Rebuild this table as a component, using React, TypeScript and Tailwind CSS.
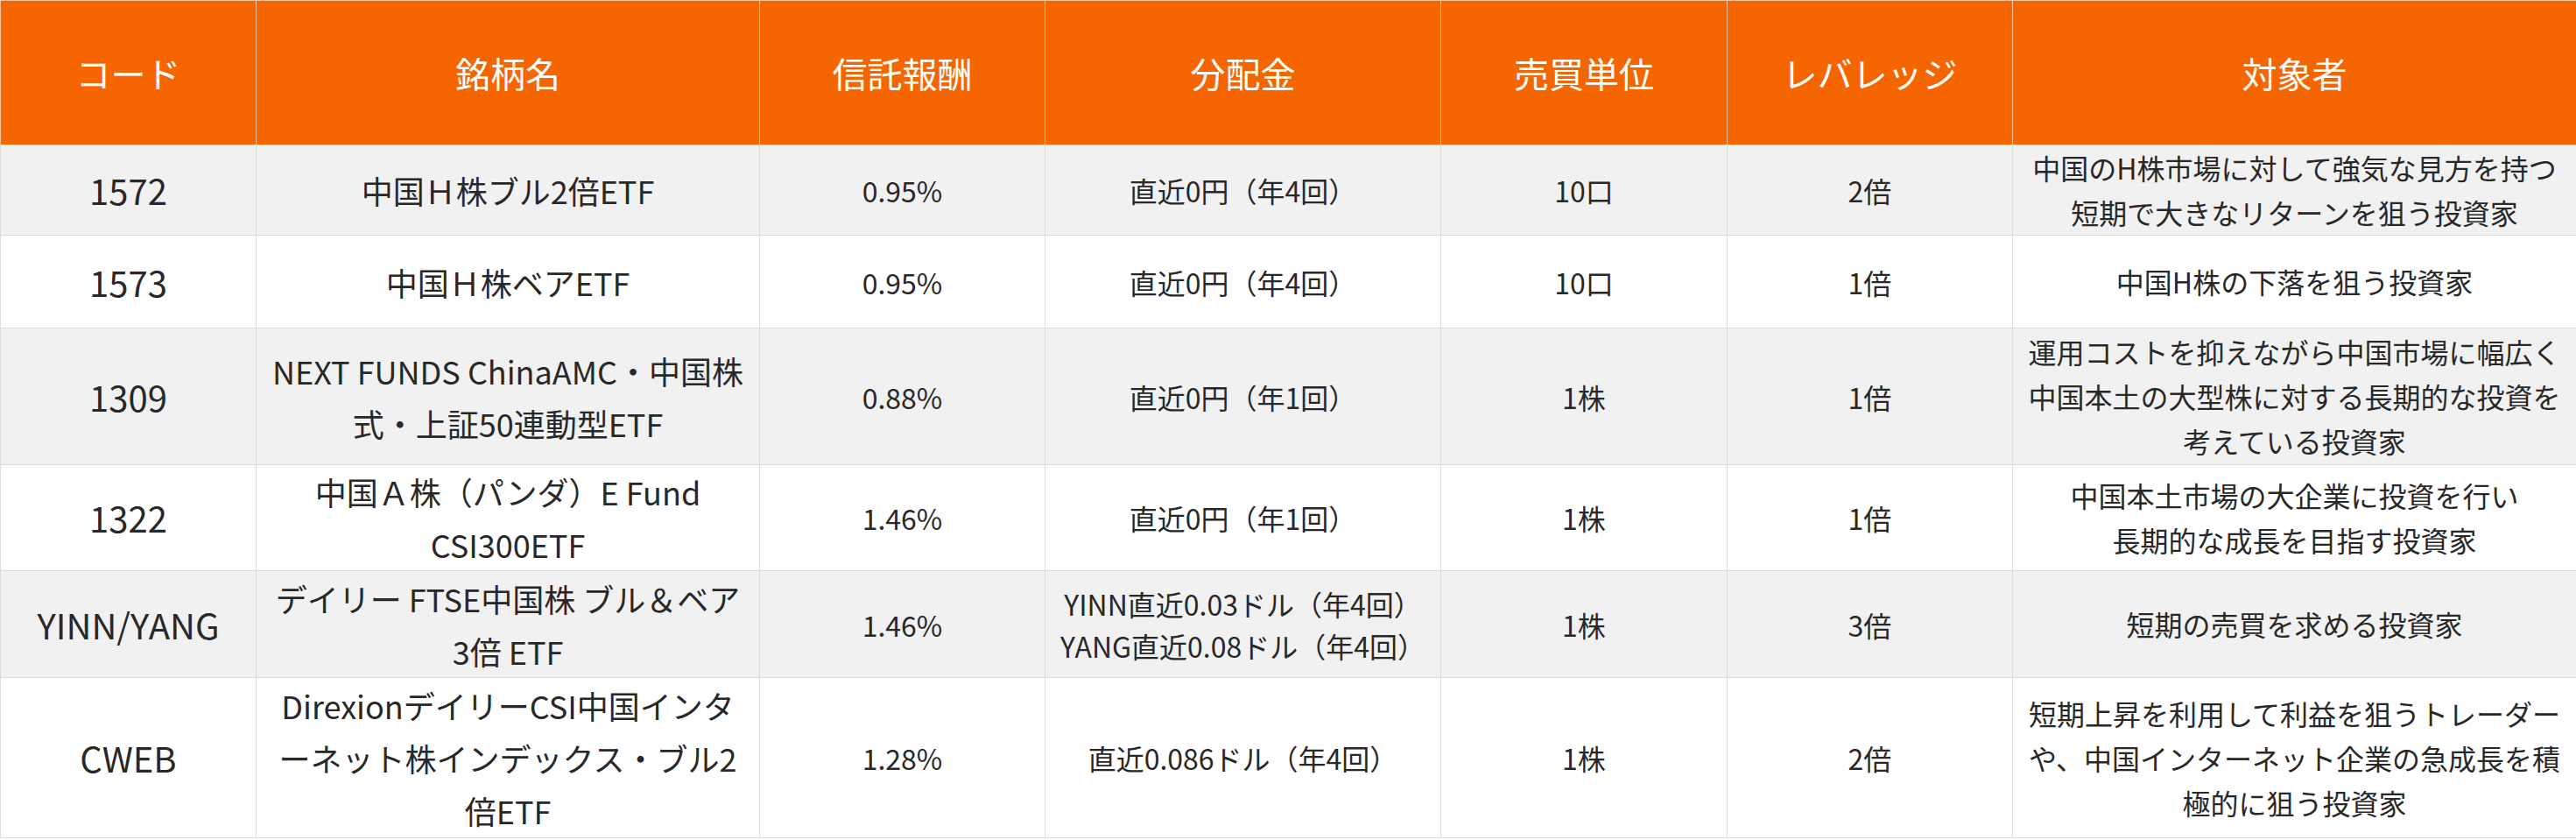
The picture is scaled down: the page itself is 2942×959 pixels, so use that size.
import React from 'react';

type Row = {
  code: string;
  name: string[];
  fee: string;
  dividend: string[];
  unit: string;
  leverage: string;
  target: string[];
  height: string;
  shaded: boolean;
};

const headers = ['コード', '銘柄名', '信託報酬', '分配金', '売買単位', 'レバレッジ', '対象者'];

const rows: Row[] = [
  {
    code: '1572',
    name: ['中国Ｈ株ブル2倍ETF'],
    fee: '0.95%',
    dividend: ['直近0円（年4回）'],
    unit: '10口',
    leverage: '2倍',
    target: ['中国のH株市場に対して強気な見方を持つ', '短期で大きなリターンを狙う投資家'],
    height: 'h-[103px]',
    shaded: true,
  },
  {
    code: '1573',
    name: ['中国Ｈ株ベアETF'],
    fee: '0.95%',
    dividend: ['直近0円（年4回）'],
    unit: '10口',
    leverage: '1倍',
    target: ['中国H株の下落を狙う投資家'],
    height: 'h-[106px]',
    shaded: false,
  },
  {
    code: '1309',
    name: ['NEXT FUNDS ChinaAMC・中国株', '式・上証50連動型ETF'],
    fee: '0.88%',
    dividend: ['直近0円（年1回）'],
    unit: '1株',
    leverage: '1倍',
    target: ['運用コストを抑えながら中国市場に幅広く', '中国本土の大型株に対する長期的な投資を', '考えている投資家'],
    height: 'h-[156px]',
    shaded: true,
  },
  {
    code: '1322',
    name: ['中国Ａ株（パンダ）E Fund', 'CSI300ETF'],
    fee: '1.46%',
    dividend: ['直近0円（年1回）'],
    unit: '1株',
    leverage: '1倍',
    target: ['中国本土市場の大企業に投資を行い', '長期的な成長を目指す投資家'],
    height: 'h-[121px]',
    shaded: false,
  },
  {
    code: 'YINN/YANG',
    name: ['デイリー FTSE中国株 ブル＆ベア', '3倍 ETF'],
    fee: '1.46%',
    dividend: ['YINN直近0.03ドル（年4回）', 'YANG直近0.08ドル（年4回）'],
    unit: '1株',
    leverage: '3倍',
    target: ['短期の売買を求める投資家'],
    height: 'h-[122px]',
    shaded: true,
  },
  {
    code: 'CWEB',
    name: ['DirexionデイリーCSI中国インタ', 'ーネット株インデックス・ブル2', '倍ETF'],
    fee: '1.28%',
    dividend: ['直近0.086ドル（年4回）'],
    unit: '1株',
    leverage: '2倍',
    target: ['短期上昇を利用して利益を狙うトレーダー', 'や、中国インターネット企業の急成長を積', '極的に狙う投資家'],
    height: 'h-[183px]',
    shaded: false,
  },
];

const Lines: React.FC<{ lines: string[] }> = ({ lines }) => (
  <>
    {lines.map((line, i) => (
      <span key={i} className="block">
        {line}
      </span>
    ))}
  </>
);

const cell = 'border border-[#dcdcdc] text-center align-middle p-0';

export default function App() {
  return (
    <div className="w-[2942px] bg-white font-['Noto_Sans_CJK_JP',sans-serif] text-[#282828]">
      <table className="w-full table-fixed border-collapse">
        <colgroup>
          <col className="w-[292px]" />
          <col className="w-[575px]" />
          <col className="w-[326px]" />
          <col className="w-[452px]" />
          <col className="w-[327px]" />
          <col className="w-[326px]" />
          <col className="w-[644px]" />
        </colgroup>
        <thead>
          <tr className="h-[165px] bg-[#f56500]">
            {headers.map((h) => (
              <th
                key={h}
                className="border-x border-t border-[#f7c9a4] border-b-[#e6e6e6] text-center align-middle p-0 text-[40px] font-normal text-white"
              >
                {h}
              </th>
            ))}
          </tr>
        </thead>
        <tbody>
          {rows.map((r) => (
            <tr key={r.code} className={`${r.height} ${r.shaded ? 'bg-[#f1f1f1]' : 'bg-white'}`}>
              <td className={`${cell} text-[40px] leading-[50px]`}>{r.code}</td>
              <td className={`${cell} text-[36px] leading-[60px]`}>
                <Lines lines={r.name} />
              </td>
              <td className={`${cell} text-[32px] leading-[50px]`}>{r.fee}</td>
              <td className={`${cell} text-[32px] leading-[48px]`}>
                <Lines lines={r.dividend} />
              </td>
              <td className={`${cell} text-[32px] leading-[50px]`}>{r.unit}</td>
              <td className={`${cell} text-[32px] leading-[50px]`}>{r.leverage}</td>
              <td className={`${cell} text-[32px] leading-[51px]`}>
                <Lines lines={r.target} />
              </td>
            </tr>
          ))}
        </tbody>
      </table>
    </div>
  );
}
